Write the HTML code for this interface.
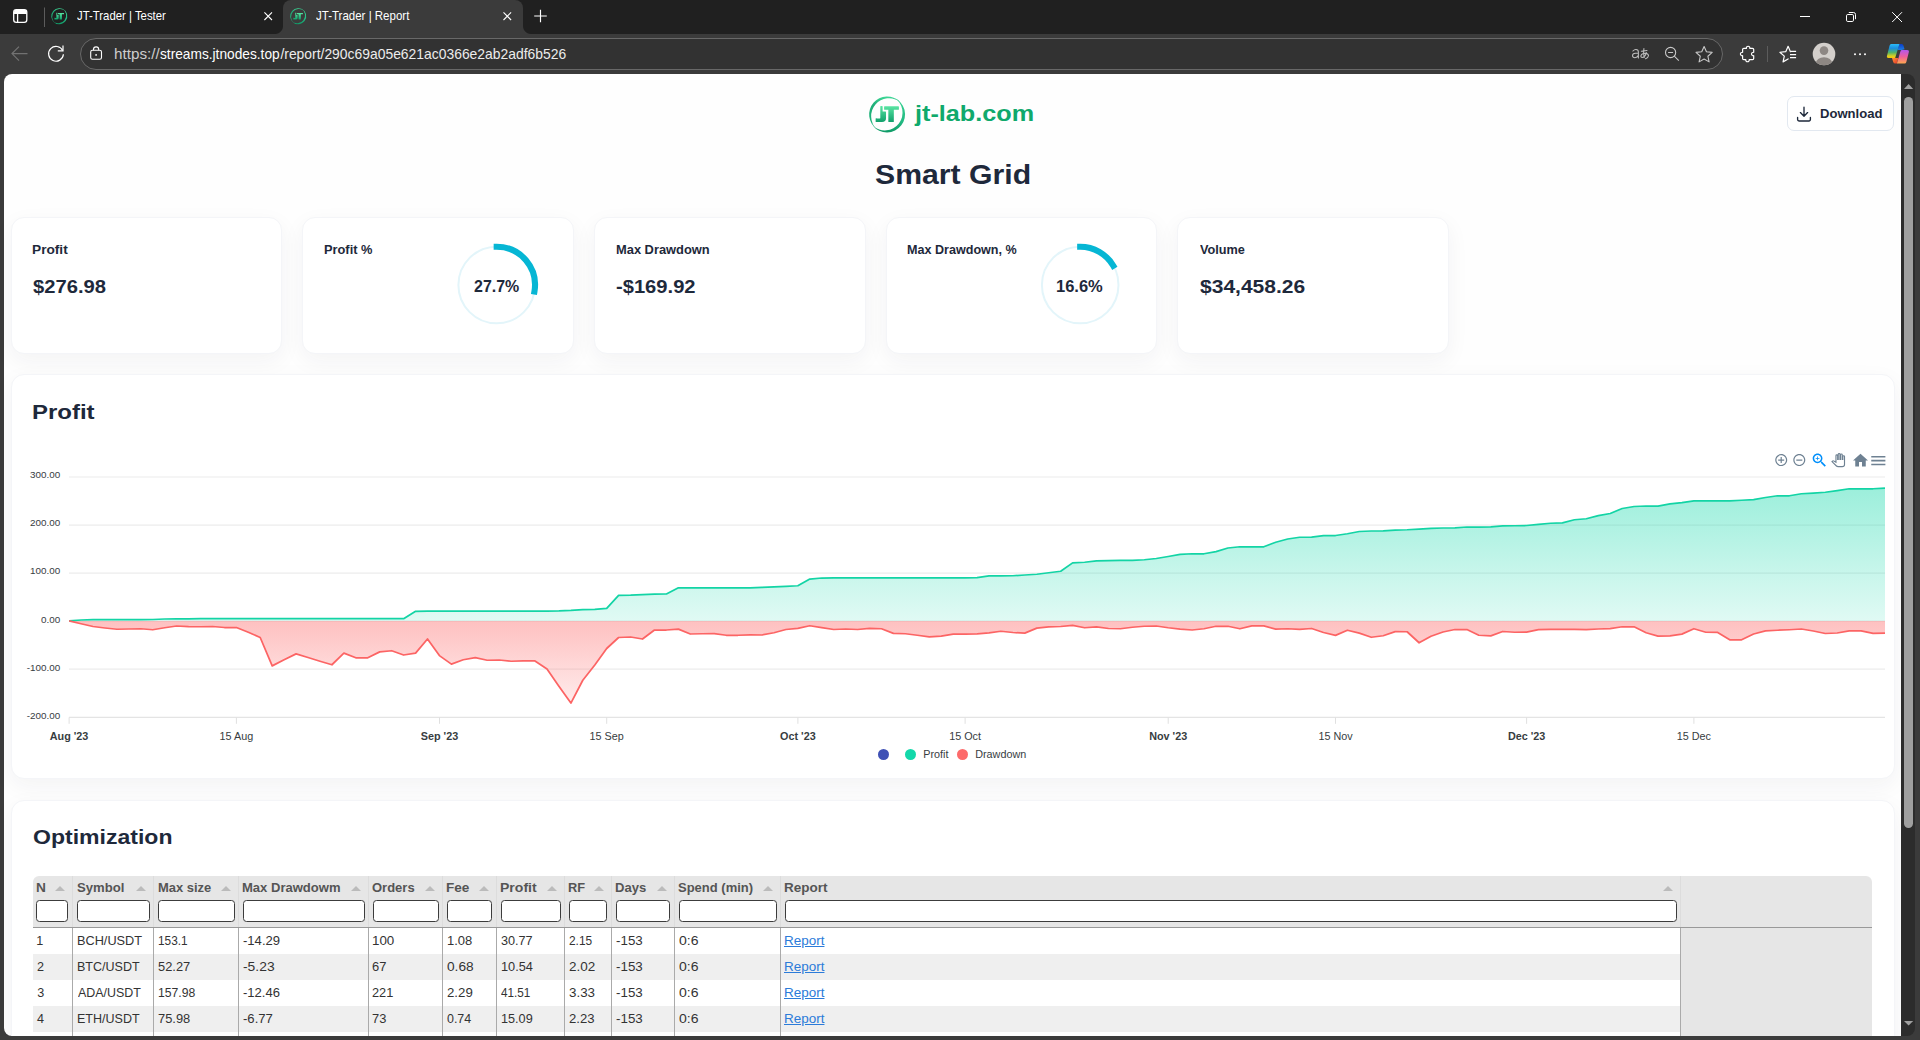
<!DOCTYPE html>
<html lang="en"><head><meta charset="utf-8"><title>JT-Trader | Report</title>
<style>
*{box-sizing:border-box;margin:0;padding:0}
html,body{width:1920px;height:1040px;overflow:hidden;background:#3b3b3b;font-family:"Liberation Sans",sans-serif}
.t{position:absolute;white-space:nowrap;line-height:1;display:block}
.abs{position:absolute}
#tabstrip{position:absolute;left:0;top:0;width:1920px;height:34px;background:#202020}
#toolbar{position:absolute;left:0;top:34px;width:1920px;height:40px;background:#3b3b3b}
#acttab{position:absolute;left:283px;top:0;width:240px;height:34px;background:#3b3b3b;border-radius:8px 8px 0 0}
#acttab:before,#acttab:after{content:"";position:absolute;bottom:0;width:8px;height:8px;background:radial-gradient(circle at 0 0,rgba(0,0,0,0) 7.5px,#3b3b3b 8.5px)}
#acttab:before{left:-8px}
#acttab:after{right:-8px;background:radial-gradient(circle at 100% 0,rgba(0,0,0,0) 7.5px,#3b3b3b 8.5px)}
#urlbox{position:absolute;left:80.2px;top:38px;width:1642.8px;height:32px;border-radius:16px;background:#323232;border:1px solid #686868}
#page{position:absolute;left:4px;top:74px;width:1897px;height:962px;background:#fefefe;border-radius:8px 0 0 8px;overflow:hidden}
#sbar{position:absolute;left:1901px;top:74px;width:14px;height:962px;background:#2c2c2c;border-radius:0 8px 8px 0}
#thumb{position:absolute;left:1904px;top:97px;width:9px;height:731px;background:#9f9f9f;border-radius:5px}
.card{position:absolute;background:#fff;border:1px solid #f4f5f8;border-radius:13px;box-shadow:0 7px 22px rgba(30,41,59,.05)}
.inp{position:absolute;top:900px;height:22.4px;background:#fff;border:1px solid #3c3c3c;border-radius:3.5px}
.arr{position:absolute;top:886.2px;width:0;height:0;border-left:5px solid transparent;border-right:5px solid transparent;border-bottom:5px solid #bbb}
.vb{position:absolute;width:1px;background:#aaa}
.row{position:absolute;left:33px;width:1647.5px;height:26px}
a.t{text-decoration:underline}
</style></head><body>

<div id="tabstrip"></div><div id="toolbar"></div><div id="acttab"></div><div id="urlbox"></div>
<div id="page">
</div>
<div id="sbar"></div><div id="thumb"></div>
<div id="pg" class="abs" style="left:0;top:0;width:1901px;height:1036px;overflow:hidden">
<span class="t " style="left:915.04px;top:103.01px;font-size:22.6px;font-weight:700;color:#10a96c;transform:scaleX(1.1162);transform-origin:0 0;">jt-lab.com</span>
<span class="t " style="left:874.97px;top:160.00px;font-size:28.2px;font-weight:700;color:#1e293b;transform:scaleX(1.0719);transform-origin:0 0;">Smart Grid</span>
<div class="abs" style="left:1787px;top:96px;width:107px;height:34.5px;border:1px solid #e2e8f0;border-radius:7px;background:#fff"></div>
<span class="t " style="left:1819.75px;top:108.02px;font-size:12.6px;font-weight:700;color:#1e293b;transform:scaleX(1.0383);transform-origin:0 0;">Download</span>
<div class="card" style="left:10.5px;top:217px;width:271.8px;height:137px"></div>
<div class="card" style="left:302.2px;top:217px;width:271.8px;height:137px"></div>
<div class="card" style="left:593.9px;top:217px;width:271.8px;height:137px"></div>
<div class="card" style="left:885.5px;top:217px;width:271.8px;height:137px"></div>
<div class="card" style="left:1177.2px;top:217px;width:271.8px;height:137px"></div>
<span class="t " style="left:32.41px;top:244.01px;font-size:12.3px;font-weight:700;color:#1e293b;transform:scaleX(1.1129);transform-origin:0 0;">Profit</span>
<span class="t " style="left:33.15px;top:278.00px;font-size:18.8px;font-weight:700;color:#1e293b;transform:scaleX(1.0750);transform-origin:0 0;">$276.98</span>
<span class="t " style="left:324.07px;top:244.01px;font-size:12.3px;font-weight:700;color:#1e293b;transform:scaleX(1.0421);transform-origin:0 0;">Profit %</span>
<span class="t " style="left:474.28px;top:279.01px;font-size:15.6px;font-weight:700;color:#1e293b;transform:scaleX(1.0238);transform-origin:0 0;">27.7%</span>
<span class="t " style="left:615.66px;top:244.01px;font-size:12.3px;font-weight:700;color:#1e293b;transform:scaleX(1.0469);transform-origin:0 0;">Max Drawdown</span>
<span class="t " style="left:616.14px;top:278.00px;font-size:18.8px;font-weight:700;color:#1e293b;transform:scaleX(1.0728);transform-origin:0 0;">-$169.92</span>
<span class="t " style="left:907.18px;top:244.01px;font-size:12.3px;font-weight:700;color:#1e293b;transform:scaleX(1.0225);transform-origin:0 0;">Max Drawdown, %</span>
<span class="t " style="left:1056.37px;top:279.01px;font-size:15.6px;font-weight:700;color:#1e293b;transform:scaleX(1.0583);transform-origin:0 0;">16.6%</span>
<span class="t " style="left:1199.74px;top:244.01px;font-size:12.3px;font-weight:700;color:#1e293b;transform:scaleX(1.0314);transform-origin:0 0;">Volume</span>
<span class="t " style="left:1199.54px;top:278.00px;font-size:18.8px;font-weight:700;color:#1e293b;transform:scaleX(1.1196);transform-origin:0 0;">$34,458.26</span>
<div class="card" style="left:10.5px;top:374.1px;width:1884.8px;height:405px"></div>
<div class="card" style="left:10.5px;top:799.6px;width:1884.8px;height:300px"></div>
<span class="t " style="left:32.44px;top:402.00px;font-size:20.6px;font-weight:700;color:#1e293b;transform:scaleX(1.1643);transform-origin:0 0;">Profit</span>
<span class="t " style="left:32.88px;top:827.01px;font-size:20.4px;font-weight:700;color:#1e293b;transform:scaleX(1.1294);transform-origin:0 0;">Optimization</span>
<div class="abs" style="left:33px;top:876px;width:1839px;height:170px;background:#e6e6e6;border-radius:6px 6px 0 0"></div>
<div class="row" style="top:927.8px;background:#fff"></div>
<div class="row" style="top:953.75px;background:#efefef"></div>
<div class="row" style="top:979.7px;background:#fff"></div>
<div class="row" style="top:1005.65px;background:#efefef"></div>
<div class="row" style="top:1031.6px;background:#fff"></div>
<div class="abs" style="left:33px;top:927px;width:1839px;height:1px;background:#999"></div>
<div class="vb" style="left:72.3px;top:876px;height:51px;background:#dcdcdc"></div>
<div class="vb" style="left:72.3px;top:928px;height:120px"></div>
<div class="vb" style="left:153.3px;top:876px;height:51px;background:#dcdcdc"></div>
<div class="vb" style="left:153.3px;top:928px;height:120px"></div>
<div class="vb" style="left:238.3px;top:876px;height:51px;background:#dcdcdc"></div>
<div class="vb" style="left:238.3px;top:928px;height:120px"></div>
<div class="vb" style="left:368.3px;top:876px;height:51px;background:#dcdcdc"></div>
<div class="vb" style="left:368.3px;top:928px;height:120px"></div>
<div class="vb" style="left:442.4px;top:876px;height:51px;background:#dcdcdc"></div>
<div class="vb" style="left:442.4px;top:928px;height:120px"></div>
<div class="vb" style="left:496.3px;top:876px;height:51px;background:#dcdcdc"></div>
<div class="vb" style="left:496.3px;top:928px;height:120px"></div>
<div class="vb" style="left:564.4px;top:876px;height:51px;background:#dcdcdc"></div>
<div class="vb" style="left:564.4px;top:928px;height:120px"></div>
<div class="vb" style="left:611.2px;top:876px;height:51px;background:#dcdcdc"></div>
<div class="vb" style="left:611.2px;top:928px;height:120px"></div>
<div class="vb" style="left:674.3px;top:876px;height:51px;background:#dcdcdc"></div>
<div class="vb" style="left:674.3px;top:928px;height:120px"></div>
<div class="vb" style="left:780.4px;top:876px;height:51px;background:#dcdcdc"></div>
<div class="vb" style="left:780.4px;top:928px;height:120px"></div>
<div class="vb" style="left:1680.4px;top:876px;height:51px;background:#dcdcdc"></div>
<div class="vb" style="left:1680.4px;top:928px;height:120px"></div>
<div class="inp" style="left:36.2px;width:32.3px"></div>
<div class="arr" style="left:54.7px"></div>
<div class="inp" style="left:77.0px;width:72.5px"></div>
<div class="arr" style="left:135.7px"></div>
<div class="inp" style="left:158.0px;width:76.5px"></div>
<div class="arr" style="left:220.7px"></div>
<div class="inp" style="left:243.0px;width:121.5px"></div>
<div class="arr" style="left:350.7px"></div>
<div class="inp" style="left:373.0px;width:65.6px"></div>
<div class="arr" style="left:424.8px"></div>
<div class="inp" style="left:447.1px;width:45.4px"></div>
<div class="arr" style="left:478.7px"></div>
<div class="inp" style="left:501.0px;width:59.6px"></div>
<div class="arr" style="left:546.8px"></div>
<div class="inp" style="left:569.1px;width:38.3px"></div>
<div class="arr" style="left:593.6px"></div>
<div class="inp" style="left:615.9px;width:54.6px"></div>
<div class="arr" style="left:656.7px"></div>
<div class="inp" style="left:679.0px;width:97.6px"></div>
<div class="arr" style="left:762.8px"></div>
<div class="inp" style="left:785.1px;width:891.5px"></div>
<div class="arr" style="left:1662.8px"></div>
<span class="t " style="left:36.41px;top:882.00px;font-size:12.3px;font-weight:700;color:#555;transform:scaleX(1.1162);transform-origin:0 0;">N</span>
<span class="t " style="left:76.94px;top:882.00px;font-size:12.3px;font-weight:700;color:#555;transform:scaleX(1.0663);transform-origin:0 0;">Symbol</span>
<span class="t " style="left:157.56px;top:882.00px;font-size:12.3px;font-weight:700;color:#555;transform:scaleX(1.0530);transform-origin:0 0;">Max size</span>
<span class="t " style="left:242.25px;top:882.00px;font-size:12.3px;font-weight:700;color:#555;transform:scaleX(1.0603);transform-origin:0 0;">Max Drawdowm</span>
<span class="t " style="left:372.28px;top:882.00px;font-size:12.3px;font-weight:700;color:#555;transform:scaleX(1.0569);transform-origin:0 0;">Orders</span>
<span class="t " style="left:446.42px;top:882.00px;font-size:12.3px;font-weight:700;color:#555;transform:scaleX(1.1007);transform-origin:0 0;">Fee</span>
<span class="t " style="left:500.49px;top:882.00px;font-size:12.3px;font-weight:700;color:#555;transform:scaleX(1.1417);transform-origin:0 0;">Profit</span>
<span class="t " style="left:567.97px;top:882.00px;font-size:12.3px;font-weight:700;color:#555;transform:scaleX(1.0422);transform-origin:0 0;">RF</span>
<span class="t " style="left:615.45px;top:882.00px;font-size:12.3px;font-weight:700;color:#555;transform:scaleX(1.0627);transform-origin:0 0;">Days</span>
<span class="t " style="left:678.34px;top:882.00px;font-size:12.3px;font-weight:700;color:#555;transform:scaleX(1.0564);transform-origin:0 0;">Spend (min)</span>
<span class="t " style="left:784.02px;top:882.00px;font-size:12.3px;font-weight:700;color:#555;transform:scaleX(1.0978);transform-origin:0 0;">Report</span>
<span class="t" style="left:36.36px;top:935.01px;font-size:12.6px;font-weight:400;color:#333;">1</span>
<span class="t " style="left:76.88px;top:935.01px;font-size:12.6px;font-weight:400;color:#333;transform:scaleX(1.0107);transform-origin:0 0;">BCH/USDT</span>
<span class="t " style="left:157.91px;top:935.01px;font-size:12.6px;font-weight:400;color:#333;transform:scaleX(0.9404);transform-origin:0 0;">153.1</span>
<span class="t " style="left:243.14px;top:935.01px;font-size:12.6px;font-weight:400;color:#333;transform:scaleX(1.0370);transform-origin:0 0;">-14.29</span>
<span class="t " style="left:372.00px;top:935.01px;font-size:12.6px;font-weight:400;color:#333;transform:scaleX(1.0616);transform-origin:0 0;">100</span>
<span class="t " style="left:446.72px;top:935.01px;font-size:12.6px;font-weight:400;color:#333;transform:scaleX(1.0322);transform-origin:0 0;">1.08</span>
<span class="t " style="left:501.23px;top:935.01px;font-size:12.6px;font-weight:400;color:#333;transform:scaleX(1.0046);transform-origin:0 0;">30.77</span>
<span class="t " style="left:568.70px;top:935.01px;font-size:12.6px;font-weight:400;color:#333;transform:scaleX(0.9455);transform-origin:0 0;">2.15</span>
<span class="t " style="left:616.23px;top:935.01px;font-size:12.6px;font-weight:400;color:#333;transform:scaleX(1.0610);transform-origin:0 0;">-153</span>
<span class="t " style="left:678.57px;top:935.01px;font-size:12.6px;font-weight:400;color:#333;transform:scaleX(1.1147);transform-origin:0 0;">0:6</span>
<a class="t" style="left:783.82px;top:935.01px;font-size:12.6px;color:#2b7bd9;transform:scaleX(1.0700);transform-origin:0 0">Report</a>
<span class="t" style="left:36.97px;top:961.02px;font-size:12.6px;font-weight:400;color:#333;">2</span>
<span class="t " style="left:76.90px;top:961.02px;font-size:12.6px;font-weight:400;color:#333;transform:scaleX(0.9945);transform-origin:0 0;">BTC/USDT</span>
<span class="t " style="left:158.28px;top:961.02px;font-size:12.6px;font-weight:400;color:#333;transform:scaleX(1.0221);transform-origin:0 0;">52.27</span>
<span class="t " style="left:243.11px;top:961.02px;font-size:12.6px;font-weight:400;color:#333;transform:scaleX(1.1004);transform-origin:0 0;">-5.23</span>
<span class="t " style="left:372.35px;top:961.02px;font-size:12.6px;font-weight:400;color:#333;transform:scaleX(1.0268);transform-origin:0 0;">67</span>
<span class="t " style="left:447.19px;top:961.02px;font-size:12.6px;font-weight:400;color:#333;transform:scaleX(1.0879);transform-origin:0 0;">0.68</span>
<span class="t " style="left:500.74px;top:961.02px;font-size:12.6px;font-weight:400;color:#333;transform:scaleX(1.0119);transform-origin:0 0;">10.54</span>
<span class="t " style="left:568.63px;top:961.02px;font-size:12.6px;font-weight:400;color:#333;transform:scaleX(1.0697);transform-origin:0 0;">2.02</span>
<span class="t " style="left:616.23px;top:961.02px;font-size:12.6px;font-weight:400;color:#333;transform:scaleX(1.0610);transform-origin:0 0;">-153</span>
<span class="t " style="left:678.57px;top:961.02px;font-size:12.6px;font-weight:400;color:#333;transform:scaleX(1.1147);transform-origin:0 0;">0:6</span>
<a class="t" style="left:783.82px;top:961.02px;font-size:12.6px;color:#2b7bd9;transform:scaleX(1.0700);transform-origin:0 0">Report</a>
<span class="t" style="left:37.13px;top:987.02px;font-size:12.6px;font-weight:400;color:#333;">3</span>
<span class="t " style="left:77.90px;top:987.02px;font-size:12.6px;font-weight:400;color:#333;transform:scaleX(0.9883);transform-origin:0 0;">ADA/USDT</span>
<span class="t " style="left:157.88px;top:987.02px;font-size:12.6px;font-weight:400;color:#333;transform:scaleX(0.9683);transform-origin:0 0;">157.98</span>
<span class="t " style="left:243.15px;top:987.02px;font-size:12.6px;font-weight:400;color:#333;transform:scaleX(1.0361);transform-origin:0 0;">-12.46</span>
<span class="t " style="left:372.36px;top:987.02px;font-size:12.6px;font-weight:400;color:#333;transform:scaleX(1.0161);transform-origin:0 0;">221</span>
<span class="t " style="left:447.04px;top:987.02px;font-size:12.6px;font-weight:400;color:#333;transform:scaleX(1.0511);transform-origin:0 0;">2.29</span>
<span class="t " style="left:501.44px;top:987.02px;font-size:12.6px;font-weight:400;color:#333;letter-spacing:-0.028px;transform:scaleX(0.9300);transform-origin:0 0;">41.51</span>
<span class="t " style="left:568.80px;top:987.02px;font-size:12.6px;font-weight:400;color:#333;transform:scaleX(1.0596);transform-origin:0 0;">3.33</span>
<span class="t " style="left:616.23px;top:987.02px;font-size:12.6px;font-weight:400;color:#333;transform:scaleX(1.0610);transform-origin:0 0;">-153</span>
<span class="t " style="left:678.57px;top:987.02px;font-size:12.6px;font-weight:400;color:#333;transform:scaleX(1.1147);transform-origin:0 0;">0:6</span>
<a class="t" style="left:783.82px;top:987.02px;font-size:12.6px;color:#2b7bd9;transform:scaleX(1.0700);transform-origin:0 0">Report</a>
<span class="t" style="left:36.92px;top:1013.01px;font-size:12.6px;font-weight:400;color:#333;">4</span>
<span class="t " style="left:76.90px;top:1013.01px;font-size:12.6px;font-weight:400;color:#333;transform:scaleX(0.9945);transform-origin:0 0;">ETH/USDT</span>
<span class="t " style="left:158.16px;top:1013.01px;font-size:12.6px;font-weight:400;color:#333;transform:scaleX(1.0231);transform-origin:0 0;">75.98</span>
<span class="t " style="left:243.14px;top:1013.01px;font-size:12.6px;font-weight:400;color:#333;transform:scaleX(1.0413);transform-origin:0 0;">-6.77</span>
<span class="t " style="left:372.36px;top:1013.01px;font-size:12.6px;font-weight:400;color:#333;transform:scaleX(1.0218);transform-origin:0 0;">73</span>
<span class="t " style="left:447.23px;top:1013.01px;font-size:12.6px;font-weight:400;color:#333;transform:scaleX(0.9878);transform-origin:0 0;">0.74</span>
<span class="t " style="left:500.75px;top:1013.01px;font-size:12.6px;font-weight:400;color:#333;transform:scaleX(1.0060);transform-origin:0 0;">15.09</span>
<span class="t " style="left:568.64px;top:1013.01px;font-size:12.6px;font-weight:400;color:#333;transform:scaleX(1.0411);transform-origin:0 0;">2.23</span>
<span class="t " style="left:616.23px;top:1013.01px;font-size:12.6px;font-weight:400;color:#333;transform:scaleX(1.0610);transform-origin:0 0;">-153</span>
<span class="t " style="left:678.57px;top:1013.01px;font-size:12.6px;font-weight:400;color:#333;transform:scaleX(1.1147);transform-origin:0 0;">0:6</span>
<a class="t" style="left:783.82px;top:1013.01px;font-size:12.6px;color:#2b7bd9;transform:scaleX(1.0700);transform-origin:0 0">Report</a>
</div>
<svg class="abs" style="left:0;top:0" width="1920" height="1040" viewBox="0 0 1920 1040" font-family='"Liberation Sans", sans-serif'>
<defs>
<linearGradient id="gg" x1="0" y1="0" x2="0" y2="1"><stop offset="0" stop-color="#13d8aa" stop-opacity=".42"/><stop offset="1" stop-color="#13d8aa" stop-opacity=".13"/></linearGradient>
<linearGradient id="rg" x1="0" y1="0" x2="0" y2="1"><stop offset="0" stop-color="#fd6a6a" stop-opacity=".42"/><stop offset="1" stop-color="#fd6a6a" stop-opacity=".13"/></linearGradient>
<linearGradient id="lg" gradientUnits="userSpaceOnUse" x1="0" y1="110" x2="0" y2="950"><stop offset="0" stop-color="#3bd694"/><stop offset=".7" stop-color="#22b982"/><stop offset="1" stop-color="#0f9a66"/></linearGradient>
<linearGradient id="lg2" x1="0" y1="0" x2="0" y2="1"><stop offset="0" stop-color="#45e0a0"/><stop offset="1" stop-color="#159e6b"/></linearGradient>
<clipPath id="pageclip"><rect x="4" y="74" width="1897" height="962"/></clipPath>
</defs>
<g clip-path="url(#pageclip)">
<line x1="69" x2="1885" y1="477" y2="477" stroke="#ececec" stroke-width="1.2"/>
<line x1="69" x2="1885" y1="525.1" y2="525.1" stroke="#ececec" stroke-width="1.2"/>
<line x1="69" x2="1885" y1="573.1" y2="573.1" stroke="#ececec" stroke-width="1.2"/>
<line x1="69" x2="1885" y1="621.1" y2="621.1" stroke="#ececec" stroke-width="1.2"/>
<line x1="69" x2="1885" y1="669.2" y2="669.2" stroke="#ececec" stroke-width="1.2"/>
<line x1="69" x2="1885" y1="717.4" y2="717.4" stroke="#e4e4e4" stroke-width="1.2"/>
<line x1="69.1" x2="69.1" y1="717.4" y2="723.8" stroke="#e0e0e0" stroke-width="1"/>
<text x="69.1" y="739.8" text-anchor="middle" font-size="10.8" font-weight="700" fill="#373d3f">Aug '23</text>
<line x1="236.4" x2="236.4" y1="717.4" y2="723.8" stroke="#e0e0e0" stroke-width="1"/>
<text x="236.4" y="739.8" text-anchor="middle" font-size="10.8" font-weight="400" fill="#373d3f">15 Aug</text>
<line x1="439.5" x2="439.5" y1="717.4" y2="723.8" stroke="#e0e0e0" stroke-width="1"/>
<text x="439.5" y="739.8" text-anchor="middle" font-size="10.8" font-weight="700" fill="#373d3f">Sep '23</text>
<line x1="606.7" x2="606.7" y1="717.4" y2="723.8" stroke="#e0e0e0" stroke-width="1"/>
<text x="606.7" y="739.8" text-anchor="middle" font-size="10.8" font-weight="400" fill="#373d3f">15 Sep</text>
<line x1="797.9" x2="797.9" y1="717.4" y2="723.8" stroke="#e0e0e0" stroke-width="1"/>
<text x="797.9" y="739.8" text-anchor="middle" font-size="10.8" font-weight="700" fill="#373d3f">Oct '23</text>
<line x1="965.1" x2="965.1" y1="717.4" y2="723.8" stroke="#e0e0e0" stroke-width="1"/>
<text x="965.1" y="739.8" text-anchor="middle" font-size="10.8" font-weight="400" fill="#373d3f">15 Oct</text>
<line x1="1168.2" x2="1168.2" y1="717.4" y2="723.8" stroke="#e0e0e0" stroke-width="1"/>
<text x="1168.2" y="739.8" text-anchor="middle" font-size="10.8" font-weight="700" fill="#373d3f">Nov '23</text>
<line x1="1335.5" x2="1335.5" y1="717.4" y2="723.8" stroke="#e0e0e0" stroke-width="1"/>
<text x="1335.5" y="739.8" text-anchor="middle" font-size="10.8" font-weight="400" fill="#373d3f">15 Nov</text>
<line x1="1526.6" x2="1526.6" y1="717.4" y2="723.8" stroke="#e0e0e0" stroke-width="1"/>
<text x="1526.6" y="739.8" text-anchor="middle" font-size="10.8" font-weight="700" fill="#373d3f">Dec '23</text>
<line x1="1693.9" x2="1693.9" y1="717.4" y2="723.8" stroke="#e0e0e0" stroke-width="1"/>
<text x="1693.9" y="739.8" text-anchor="middle" font-size="10.8" font-weight="400" fill="#373d3f">15 Dec</text>
<text x="60.2" y="478" text-anchor="end" font-size="9.9" fill="#373d3f">300.00</text>
<text x="60.2" y="526" text-anchor="end" font-size="9.9" fill="#373d3f">200.00</text>
<text x="60.2" y="574" text-anchor="end" font-size="9.9" fill="#373d3f">100.00</text>
<text x="60.2" y="623" text-anchor="end" font-size="9.9" fill="#373d3f">0.00</text>
<text x="60.2" y="671" text-anchor="end" font-size="9.9" fill="#373d3f">-100.00</text>
<text x="60.2" y="719" text-anchor="end" font-size="9.9" fill="#373d3f">-200.00</text>
<polygon points="69.1,621.0 69.1,620.80 81.0,620.00 93.0,619.60 104.9,619.60 116.9,619.60 128.8,619.60 140.8,619.60 152.7,619.50 164.7,619.00 176.6,618.80 188.6,618.80 200.5,618.70 212.5,618.60 224.4,618.60 236.4,618.60 248.3,618.60 260.2,618.60 272.2,618.60 284.1,618.60 296.1,618.70 308.0,618.70 320.0,618.70 331.9,618.70 343.9,618.70 355.8,618.70 367.8,618.70 379.7,618.70 391.7,618.70 403.6,618.70 415.6,611.25 427.5,611.20 439.4,611.20 451.4,611.20 463.3,611.20 475.3,611.10 487.2,611.10 499.2,611.00 511.1,611.00 523.1,611.00 535.0,611.00 547.0,611.00 558.9,610.90 570.9,610.40 582.8,609.60 594.8,609.40 606.7,608.30 618.6,595.30 630.6,595.10 642.5,594.60 654.5,594.20 666.4,594.00 678.4,587.80 690.3,587.80 702.3,587.80 714.2,587.80 726.2,587.80 738.1,587.80 750.1,587.80 762.0,587.40 774.0,586.90 785.9,586.40 797.8,585.75 809.8,579.10 821.7,578.00 833.7,577.90 845.6,577.90 857.6,577.90 869.5,577.90 881.5,577.90 893.4,577.90 905.4,577.90 917.3,577.90 929.3,577.90 941.2,577.90 953.2,577.90 965.1,577.90 977.1,577.70 989.0,575.90 1000.9,575.90 1012.9,575.75 1024.8,575.00 1036.8,574.25 1048.7,572.75 1060.7,571.25 1072.6,562.90 1084.6,562.25 1096.5,560.90 1108.5,560.60 1120.4,560.40 1132.4,560.40 1144.3,559.75 1156.3,558.50 1168.2,556.50 1180.1,554.40 1192.1,553.75 1204.0,553.75 1216.0,551.60 1227.9,548.00 1239.9,546.75 1251.8,546.75 1263.8,546.75 1275.7,542.25 1287.7,539.00 1299.6,537.25 1311.6,537.10 1323.5,535.60 1335.5,535.50 1347.4,533.75 1359.3,531.50 1371.3,531.00 1383.2,530.90 1395.2,530.10 1407.1,529.75 1419.1,529.10 1431.0,528.40 1443.0,528.00 1454.9,527.90 1466.9,527.00 1478.8,527.00 1490.8,526.90 1502.7,525.90 1514.7,525.75 1526.6,525.50 1538.5,524.40 1550.5,523.25 1562.4,522.90 1574.4,519.75 1586.3,518.75 1598.3,515.60 1610.2,513.50 1622.2,508.50 1634.1,506.50 1646.1,506.00 1658.0,506.10 1670.0,503.90 1681.9,502.70 1693.9,500.90 1705.8,500.90 1717.7,500.90 1729.7,500.90 1741.6,500.25 1753.6,499.60 1765.5,497.50 1777.5,495.75 1789.4,495.75 1801.4,493.75 1813.3,493.10 1825.3,492.25 1837.2,490.60 1849.2,488.75 1861.1,488.75 1873.1,488.75 1885.0,488.10 1885.0,621.0" fill="url(#gg)"/>
<polygon points="69.1,621.0 69.1,620.90 81.0,623.75 93.0,626.50 104.9,628.00 116.9,629.25 128.8,629.00 140.8,628.75 152.7,629.75 164.7,627.75 176.6,626.00 188.6,626.60 200.5,626.75 212.5,626.50 224.4,627.50 236.4,627.50 248.3,632.25 260.2,637.50 272.2,665.90 284.1,659.75 296.1,653.90 308.0,657.50 320.0,661.25 331.9,664.75 343.9,653.10 355.8,657.75 367.8,657.75 379.7,651.90 391.7,650.75 403.6,655.00 415.6,653.10 427.5,639.00 439.4,655.60 451.4,664.10 463.3,659.75 475.3,657.60 487.2,660.25 499.2,660.00 511.1,661.25 523.1,660.90 535.0,660.90 547.0,669.00 558.9,686.25 570.9,703.10 582.8,680.25 594.8,665.00 606.7,648.50 618.6,637.50 630.6,637.00 642.5,639.00 654.5,630.00 666.4,630.00 678.4,629.10 690.3,634.00 702.3,633.75 714.2,633.60 726.2,635.25 738.1,635.25 750.1,634.80 762.0,635.00 774.0,632.75 785.9,629.50 797.8,628.40 809.8,625.75 821.7,627.60 833.7,629.50 845.6,629.00 857.6,629.50 869.5,628.40 881.5,628.75 893.4,633.40 905.4,633.75 917.3,635.25 929.3,636.90 941.2,636.10 953.2,634.10 965.1,634.10 977.1,633.90 989.0,632.80 1000.9,631.25 1012.9,632.50 1024.8,633.10 1036.8,628.10 1048.7,626.90 1060.7,626.50 1072.6,625.40 1084.6,627.75 1096.5,626.90 1108.5,628.50 1120.4,628.75 1132.4,627.25 1144.3,626.25 1156.3,626.00 1168.2,627.75 1180.1,629.10 1192.1,630.00 1204.0,628.75 1216.0,626.25 1227.9,626.25 1239.9,628.75 1251.8,625.90 1263.8,625.90 1275.7,629.10 1287.7,628.75 1299.6,629.40 1311.6,628.50 1323.5,632.50 1335.5,635.40 1347.4,630.25 1359.3,633.10 1371.3,637.25 1383.2,635.75 1395.2,631.60 1407.1,631.75 1419.1,642.75 1431.0,636.25 1443.0,632.00 1454.9,629.50 1466.9,629.50 1478.8,635.25 1490.8,635.90 1502.7,631.50 1514.7,632.25 1526.6,632.10 1538.5,629.60 1550.5,629.40 1562.4,629.40 1574.4,629.40 1586.3,629.60 1598.3,629.00 1610.2,628.60 1622.2,626.75 1634.1,626.75 1646.1,632.75 1658.0,636.10 1670.0,635.90 1681.9,634.10 1693.9,628.75 1705.8,632.25 1717.7,632.40 1729.7,639.75 1741.6,639.75 1753.6,634.00 1765.5,630.90 1777.5,630.25 1789.4,629.75 1801.4,629.00 1813.3,631.00 1825.3,633.50 1837.2,633.00 1849.2,630.90 1861.1,630.90 1873.1,633.40 1885.0,633.10 1885.0,621.0" fill="url(#rg)"/>
<polyline points="69.1,620.80 81.0,620.00 93.0,619.60 104.9,619.60 116.9,619.60 128.8,619.60 140.8,619.60 152.7,619.50 164.7,619.00 176.6,618.80 188.6,618.80 200.5,618.70 212.5,618.60 224.4,618.60 236.4,618.60 248.3,618.60 260.2,618.60 272.2,618.60 284.1,618.60 296.1,618.70 308.0,618.70 320.0,618.70 331.9,618.70 343.9,618.70 355.8,618.70 367.8,618.70 379.7,618.70 391.7,618.70 403.6,618.70 415.6,611.25 427.5,611.20 439.4,611.20 451.4,611.20 463.3,611.20 475.3,611.10 487.2,611.10 499.2,611.00 511.1,611.00 523.1,611.00 535.0,611.00 547.0,611.00 558.9,610.90 570.9,610.40 582.8,609.60 594.8,609.40 606.7,608.30 618.6,595.30 630.6,595.10 642.5,594.60 654.5,594.20 666.4,594.00 678.4,587.80 690.3,587.80 702.3,587.80 714.2,587.80 726.2,587.80 738.1,587.80 750.1,587.80 762.0,587.40 774.0,586.90 785.9,586.40 797.8,585.75 809.8,579.10 821.7,578.00 833.7,577.90 845.6,577.90 857.6,577.90 869.5,577.90 881.5,577.90 893.4,577.90 905.4,577.90 917.3,577.90 929.3,577.90 941.2,577.90 953.2,577.90 965.1,577.90 977.1,577.70 989.0,575.90 1000.9,575.90 1012.9,575.75 1024.8,575.00 1036.8,574.25 1048.7,572.75 1060.7,571.25 1072.6,562.90 1084.6,562.25 1096.5,560.90 1108.5,560.60 1120.4,560.40 1132.4,560.40 1144.3,559.75 1156.3,558.50 1168.2,556.50 1180.1,554.40 1192.1,553.75 1204.0,553.75 1216.0,551.60 1227.9,548.00 1239.9,546.75 1251.8,546.75 1263.8,546.75 1275.7,542.25 1287.7,539.00 1299.6,537.25 1311.6,537.10 1323.5,535.60 1335.5,535.50 1347.4,533.75 1359.3,531.50 1371.3,531.00 1383.2,530.90 1395.2,530.10 1407.1,529.75 1419.1,529.10 1431.0,528.40 1443.0,528.00 1454.9,527.90 1466.9,527.00 1478.8,527.00 1490.8,526.90 1502.7,525.90 1514.7,525.75 1526.6,525.50 1538.5,524.40 1550.5,523.25 1562.4,522.90 1574.4,519.75 1586.3,518.75 1598.3,515.60 1610.2,513.50 1622.2,508.50 1634.1,506.50 1646.1,506.00 1658.0,506.10 1670.0,503.90 1681.9,502.70 1693.9,500.90 1705.8,500.90 1717.7,500.90 1729.7,500.90 1741.6,500.25 1753.6,499.60 1765.5,497.50 1777.5,495.75 1789.4,495.75 1801.4,493.75 1813.3,493.10 1825.3,492.25 1837.2,490.60 1849.2,488.75 1861.1,488.75 1873.1,488.75 1885.0,488.10" fill="none" stroke="#13d4a5" stroke-width="1.75" stroke-linejoin="round"/>
<polyline points="69.1,620.90 81.0,623.75 93.0,626.50 104.9,628.00 116.9,629.25 128.8,629.00 140.8,628.75 152.7,629.75 164.7,627.75 176.6,626.00 188.6,626.60 200.5,626.75 212.5,626.50 224.4,627.50 236.4,627.50 248.3,632.25 260.2,637.50 272.2,665.90 284.1,659.75 296.1,653.90 308.0,657.50 320.0,661.25 331.9,664.75 343.9,653.10 355.8,657.75 367.8,657.75 379.7,651.90 391.7,650.75 403.6,655.00 415.6,653.10 427.5,639.00 439.4,655.60 451.4,664.10 463.3,659.75 475.3,657.60 487.2,660.25 499.2,660.00 511.1,661.25 523.1,660.90 535.0,660.90 547.0,669.00 558.9,686.25 570.9,703.10 582.8,680.25 594.8,665.00 606.7,648.50 618.6,637.50 630.6,637.00 642.5,639.00 654.5,630.00 666.4,630.00 678.4,629.10 690.3,634.00 702.3,633.75 714.2,633.60 726.2,635.25 738.1,635.25 750.1,634.80 762.0,635.00 774.0,632.75 785.9,629.50 797.8,628.40 809.8,625.75 821.7,627.60 833.7,629.50 845.6,629.00 857.6,629.50 869.5,628.40 881.5,628.75 893.4,633.40 905.4,633.75 917.3,635.25 929.3,636.90 941.2,636.10 953.2,634.10 965.1,634.10 977.1,633.90 989.0,632.80 1000.9,631.25 1012.9,632.50 1024.8,633.10 1036.8,628.10 1048.7,626.90 1060.7,626.50 1072.6,625.40 1084.6,627.75 1096.5,626.90 1108.5,628.50 1120.4,628.75 1132.4,627.25 1144.3,626.25 1156.3,626.00 1168.2,627.75 1180.1,629.10 1192.1,630.00 1204.0,628.75 1216.0,626.25 1227.9,626.25 1239.9,628.75 1251.8,625.90 1263.8,625.90 1275.7,629.10 1287.7,628.75 1299.6,629.40 1311.6,628.50 1323.5,632.50 1335.5,635.40 1347.4,630.25 1359.3,633.10 1371.3,637.25 1383.2,635.75 1395.2,631.60 1407.1,631.75 1419.1,642.75 1431.0,636.25 1443.0,632.00 1454.9,629.50 1466.9,629.50 1478.8,635.25 1490.8,635.90 1502.7,631.50 1514.7,632.25 1526.6,632.10 1538.5,629.60 1550.5,629.40 1562.4,629.40 1574.4,629.40 1586.3,629.60 1598.3,629.00 1610.2,628.60 1622.2,626.75 1634.1,626.75 1646.1,632.75 1658.0,636.10 1670.0,635.90 1681.9,634.10 1693.9,628.75 1705.8,632.25 1717.7,632.40 1729.7,639.75 1741.6,639.75 1753.6,634.00 1765.5,630.90 1777.5,630.25 1789.4,629.75 1801.4,629.00 1813.3,631.00 1825.3,633.50 1837.2,633.00 1849.2,630.90 1861.1,630.90 1873.1,633.40 1885.0,633.10" fill="none" stroke="#fc6464" stroke-width="1.75" stroke-linejoin="round"/>
<circle cx="883.5" cy="754.5" r="5.5" fill="#3f51b5"/><circle cx="910.5" cy="754.5" r="5.5" fill="#13d8aa"/><circle cx="962.5" cy="754.5" r="5.5" fill="#fd6a6a"/>
<text x="923.2" y="757.9" font-size="10.8" fill="#373d3f">Profit</text><text x="975.2" y="757.9" font-size="10.8" fill="#373d3f">Drawdown</text>
<g fill="#6e8192">
<path transform="translate(1774,452.9) scale(.6)" d="M13 7h-2v4H7v2h4v4h2v-4h4v-2h-4V7zm-1-5C6.48 2 2 6.48 2 12s4.48 10 10 10 10-4.48 10-10S17.52 2 12 2zm0 18c-4.41 0-8-3.59-8-8s3.59-8 8-8 8 3.59 8 8-3.59 8-8 8z"/>
<path transform="translate(1792.1,452.9) scale(.6)" d="M7 11v2h10v-2H7zm5-9C6.48 2 2 6.48 2 12s4.48 10 10 10 10-4.48 10-10S17.52 2 12 2zm0 18c-4.41 0-8-3.59-8-8s3.59-8 8-8 8 3.59 8 8-3.59 8-8 8z"/>
<g transform="translate(1810.4,451.2) scale(.755)" fill="#008ffb"><path d="M15.5 14h-.79l-.28-.27C15.41 12.59 16 11.11 16 9.5 16 5.91 13.09 3 9.5 3S3 5.91 3 9.5 5.910 16 9.5 16c1.61 0 3.09-.59 4.23-1.57l.27.28v.79l5 4.99L20.49 19l-4.99-5zm-6 0C7.01 14 5 11.99 5 9.5S7.01 5 9.5 5 14 7.01 14 9.5 11.99 14 9.5 14z"/><path d="M12 10h-2v2H9v-2H7V9h2V7h1v2h2v1z"/></g>
<path transform="translate(1831.4,453.5) scale(.57,.548)" fill="#fff" stroke="#6e8192" stroke-width="2" d="M23 5.5V20c0 2.2-1.8 4-4 4h-7.3c-1.08 0-2.1-.43-2.850-1.19L1 14.830s1.26-1.23 1.3-1.25c.22-.19.49-.29.79-.29.22 0 .42.06.6.160.04.01 4.310 2.460 4.310 2.460V4c0-.83.67-1.5 1.5-1.5S11 3.170 11 4v7h1V1.5c0-.83.67-1.5 1.5-1.5S15 .67 15 1.5V11h1V2.5c0-.83.67-1.5 1.5-1.5s1.5.67 1.5 1.5V11h1V5.5c0-.83.67-1.5 1.5-1.5s1.5.67 1.5 1.5z"/>
<path transform="translate(1851.5,451.55) scale(.75)" d="M10 20v-6h4v6h5v-8h3L12 3 2 12h3v8z"/>
<path transform="translate(1868.9,451.2) scale(.785)" d="M3 18h18v-2H3v2zm0-5h18v-2H3v2zm0-7v2h18V6H3z"/>
</g>
<circle cx="496.7" cy="285.0" r="38.3" fill="none" stroke="#e3f5fa" stroke-width="2"/>
<path d="M496.7 246.7 A38.3 38.3 0 0 1 534.45 291.47" fill="none" stroke="#06b6d4" stroke-width="6.1" stroke-linecap="square"/>
<circle cx="1080.2" cy="285.0" r="38.3" fill="none" stroke="#e3f5fa" stroke-width="2"/>
<path d="M1080.2 246.7 A38.3 38.3 0 0 1 1113.29 265.71" fill="none" stroke="#06b6d4" stroke-width="6.1" stroke-linecap="square"/>
<defs><g id="jtring">
<path d="M716.1 136.0A428 428 0 1 1 209.4 796.3A417.9 417.9 0 1 0 716.1 136.0z" fill="url(#lg)"/>
<path d="M845.8 230.2A424 424 0 1 0 296.8 873.0A423.6 423.6 0 0 1 845.8 230.2z" fill="url(#lg2r)"/>
</g><g id="jtlet">
<path d="M385 342q0-12 12-12h31q12 0 12 12v118h68q12 0 12 12v150q0 88-96 88h-137q-12 0-12-12v-70q0-12 12-10q60 14 98 4z" fill="url(#lgJ)"/>
<path d="M487 335h326q12 0 12 12v61q0 12-12 12h-108v278q0 12-12 12h-106q-12 0-12-12v-278h-88q-12 0-12-12v-61q0-12 12-12z" fill="url(#lgJ)"/>
</g>
<linearGradient id="lg2r" gradientUnits="userSpaceOnUse" x1="0" y1="110" x2="0" y2="830"><stop offset="0" stop-color="#3fd997"/><stop offset=".25" stop-color="#1fae78"/><stop offset="1" stop-color="#1fb57c"/></linearGradient>
<linearGradient id="lgJ" gradientUnits="userSpaceOnUse" x1="0" y1="330" x2="0" y2="710"><stop offset="0" stop-color="#5ae6a3"/><stop offset="1" stop-color="#10a06b"/></linearGradient>
</defs>
<g transform="translate(864,92) scale(0.04232)"><use href="#jtring"/><use href="#jtlet"/></g>
<g fill="none" stroke="#1e293b" stroke-width="1.35" stroke-linecap="round" stroke-linejoin="round"><path d="M1804 107.2v8.6M1800.4 112.6l3.6 3.6 3.6-3.6M1797.6 117.4v2.2a1.4 1.4 0 0 0 1.4 1.4h10a1.4 1.4 0 0 0 1.4-1.4v-2.2"/></g>
</g>
<rect x="13.7" y="9.7" width="13.1" height="12.6" rx="2.6" fill="none" stroke="#ffffff" stroke-width="1.3"/><path d="M13.7 13.3h13.1M17.6 13.3v9" stroke="#ffffff" stroke-width="1.3" fill="none"/><path d="M14 12.9v-1a2.2 2.2 0 0 1 2.2-2.2h8.1a2.2 2.2 0 0 1 2.2 2.2v1z" fill="#ffffff"/>
<line x1="44.5" x2="44.5" y1="7.5" y2="27" stroke="#5c5c5c" stroke-width="1"/>
<use href="#jtring" transform="translate(48.94,6.13) scale(0.01893)"/>
<use href="#jtlet" transform="translate(49.66,7.05) scale(0.01741)"/>
<use href="#jtring" transform="translate(287.84,6.13) scale(0.01893)"/>
<use href="#jtlet" transform="translate(288.56,7.05) scale(0.01741)"/>
<path d="M264.4 12.399999999999999L272.0 20.0M272.0 12.399999999999999L264.4 20.0" stroke="#ffffff" stroke-width="1.1" fill="none"/>
<path d="M503.5 12.399999999999999L511.1 20.0M511.1 12.399999999999999L503.5 20.0" stroke="#ffffff" stroke-width="1.1" fill="none"/>
<path d="M540.5 9.7v12.6M534.2 16h12.6" stroke="#ffffff" stroke-width="1.15" fill="none"/>
<path d="M1800 16.5h10" stroke="#ffffff" stroke-width="1" fill="none"/>
<rect x="1846.5" y="14.5" width="7" height="7" rx="1.3" fill="none" stroke="#ffffff" stroke-width="1"/><path d="M1848.8 12.5h4.7a2 2 0 0 1 2 2v4.7" fill="none" stroke="#ffffff" stroke-width="1"/>
<path d="M1892.1999999999998 12.200000000000001L1902.0 22.0M1902.0 12.200000000000001L1892.1999999999998 22.0" stroke="#ffffff" stroke-width="1.0" fill="none"/>
<path d="M27.5 53.6H12.3M19 46.6l-7 7 7 7" stroke="#727272" stroke-width="1.2" fill="none"/>
<path d="M62.7 50.6A7.4 7.4 0 1 0 63.4 54.3" stroke="#ffffff" stroke-width="1.2" fill="none"/><path d="M63 45.6v5.2h-5.2" stroke="#ffffff" stroke-width="1.2" fill="none"/>
<rect x="90.7" y="50.3" width="10.8" height="9" rx="1.8" fill="none" stroke="#ffffff" stroke-width="1.1"/><path d="M93.5 50.3v-.8a2.6 2.6 0 0 1 5.2 0v.8" fill="none" stroke="#ffffff" stroke-width="1.1"/><circle cx="96.1" cy="54.9" r=".9" fill="#ffffff"/>
<g fill="none" stroke="#bdbdbd" stroke-width="1.05" stroke-linecap="round" stroke-linejoin="round"><path d="M1632.9 51Q1634.4 49.4 1636 49.5Q1638.4 49.6 1638.4 52.2V58M1638.4 53.3H1635.5Q1632.5 53.5 1632.5 55.8Q1632.6 57.7 1634.9 57.7Q1637.4 57.6 1638.4 55.3"/><path d="M1641.3 51.2L1647 50.6M1643.9 48.5Q1643.2 53 1644.2 57.6M1646.3 52.6Q1645.3 57 1642.3 57.5Q1640.6 57.3 1640.9 55.6Q1641.8 53.3 1645.2 53.2Q1648.6 53.5 1648.5 55.8Q1648.2 58 1645.5 58.8"/></g>
<circle cx="1670.6" cy="52.5" r="5.1" fill="none" stroke="#c8c8c8" stroke-width="1.1"/><path d="M1668.1 52.5h5M1674.3 56.2l4.5 4.5" stroke="#c8c8c8" stroke-width="1.1" fill="none"/>
<polygon points="1704.10,46.50 1706.45,51.76 1712.18,52.37 1707.90,56.24 1709.10,61.88 1704.10,59.00 1699.10,61.88 1700.30,56.24 1696.02,52.37 1701.75,51.76" fill="none" stroke="#c8c8c8" stroke-width="1.1" stroke-linejoin="round"/>
<path d="M1743.8 48.4H1746.4a1.75 1.75 0 1 1 3.4 0H1752.5q1.2 0 1.2 1.2V52.3a1.75 1.75 0 1 0 0 3.4V58.4q0 1.2-1.2 1.2H1749.2a1.75 1.75 0 1 1-3.4 0H1743.8q-1.2 0-1.2-1.2V55.7a1.75 1.75 0 1 1 0-3.4V49.6q0-1.2 1.2-1.2z" fill="none" stroke="#ffffff" stroke-width="1.2" stroke-linejoin="round"/>
<line x1="1767.5" x2="1767.5" y1="46" y2="62" stroke="#5c5c5c" stroke-width="1"/>
<path d="M1790.45 51.66L1788.1 46.3L1785.75 51.66L1779.9 52.24L1784.3 56.14L1783.05 61.86L1788.1 58.9" fill="none" stroke="#ffffff" stroke-width="1.2" stroke-linejoin="round" stroke-linecap="round"/><path d="M1790.8 51.3h5.3M1790 54.5h6.1M1790 57.5h6.1" stroke="#ffffff" stroke-width="1.25" fill="none"/>
<circle cx="1824" cy="54" r="11.3" fill="#d3cfcb"/><clipPath id="pc"><circle cx="1824" cy="54" r="11.3"/></clipPath><g clip-path="url(#pc)" fill="#8d8783"><circle cx="1824" cy="50.6" r="4.3"/><ellipse cx="1824" cy="63.5" rx="8.2" ry="6.2"/></g>
<circle cx="1855" cy="54.2" r="1" fill="#ffffff"/>
<circle cx="1860" cy="54.2" r="1" fill="#ffffff"/>
<circle cx="1865" cy="54.2" r="1" fill="#ffffff"/>
<defs><linearGradient id="cpA" gradientUnits="userSpaceOnUse" x1="0" y1="195" x2="0" y2="655"><stop offset="0" stop-color="#2bbcf8"/><stop offset=".3" stop-color="#1b8fe0"/><stop offset=".6" stop-color="#52b268"/><stop offset=".85" stop-color="#d8cf22"/><stop offset="1" stop-color="#ffc30a"/></linearGradient>
<linearGradient id="cpB" gradientUnits="userSpaceOnUse" x1="0" y1="195" x2="0" y2="395"><stop offset="0" stop-color="#0b3cc8"/><stop offset="1" stop-color="#1c7fe4"/></linearGradient>
<linearGradient id="cpC" gradientUnits="userSpaceOnUse" x1="0" y1="390" x2="0" y2="830"><stop offset="0" stop-color="#b457ee"/><stop offset=".5" stop-color="#ef5f9c"/><stop offset="1" stop-color="#ffa84e"/></linearGradient>
<linearGradient id="cpD" gradientUnits="userSpaceOnUse" x1="540" y1="660" x2="700" y2="830"><stop offset="0" stop-color="#ff8c32"/><stop offset="1" stop-color="#e23a2c"/></linearGradient></defs>
<g transform="translate(1876,38) scale(.03077)">
<path d="M700 390L760 195H835Q880 195 895 250L928 365L830 392Z" fill="url(#cpB)"/>
<path d="M520 650H725L682 830H625Q575 830 560 780Z" fill="url(#cpD)"/>
<path d="M490 195H762L622 652H405Q338 652 358 580L440 250Q455 195 490 195Z" fill="url(#cpA)"/>
<path d="M832 390H1008Q1086 390 1066 462L986 780Q972 832 930 832H680L790 450Q805 390 832 390Z" fill="url(#cpC)"/>
</g>
<path d="M1904 89l4.6-5.1 4.6 5.1z" fill="#a0a0a0"/><path d="M1904 1021l4.6 4.6 4.6-4.6z" fill="#a0a0a0"/>
</svg>
<span class="t " style="left:76.83px;top:10.01px;font-size:12.2px;font-weight:400;color:#fff;transform:scaleX(0.9326);transform-origin:0 0;">JT-Trader | Tester</span>
<span class="t " style="left:315.83px;top:10.01px;font-size:12.2px;font-weight:400;color:#fff;transform:scaleX(0.9440);transform-origin:0 0;">JT-Trader | Report</span>
<span class="t " style="left:113.97px;top:48.02px;font-size:13.9px;font-weight:400;color:#cdcdcd;transform:scaleX(1.0972);transform-origin:0 0;">https://</span>
<span class="t " style="left:160.42px;top:48.02px;font-size:13.9px;font-weight:400;color:#ffffff;transform:scaleX(0.9872);transform-origin:0 0;">streams.jtnodes.top</span>
<span class="t " style="left:280.40px;top:48.02px;font-size:13.9px;font-weight:400;color:#ececec;">/report/290c69a05e621ac0366e2ab2adf6b526</span>
</body></html>
